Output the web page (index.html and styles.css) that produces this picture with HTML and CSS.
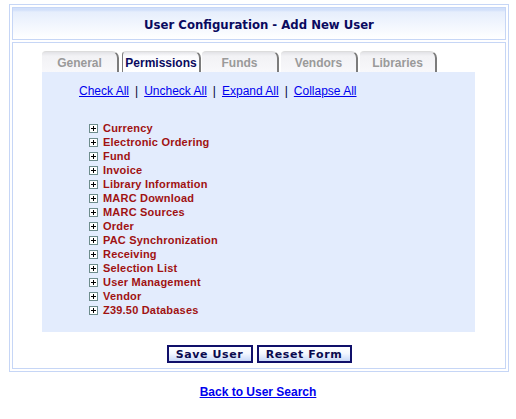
FILE: index.html
```html
<!DOCTYPE html>
<html>
<head>
<meta charset="utf-8">
<link rel="stylesheet" href="styles.css">
</head>
<body>
<div class="outer">
  <div class="header">User Configuration - Add New User</div>
  <div class="content">
    <div class="tabs">
      <div class="tab">General</div>
      <div class="tab active">Permissions</div>
      <div class="tab">Funds</div>
      <div class="tab">Vendors</div>
      <div class="tab">Libraries</div>
    </div>
    <div class="panel">
      <div class="links">
        <a href="#">Check All</a><span class="sep">|</span><a href="#">Uncheck All</a><span class="sep">|</span><a href="#">Expand All</a><span class="sep">|</span><a href="#">Collapse All</a>
      </div>
      <ul class="tree">
        <li><svg class="plus" width="9" height="9" viewBox="0 0 9 9"><rect x="0.5" y="0.5" width="8" height="8" fill="#fff" stroke="#6e8c8c"/><path d="M2 4.5h5M4.5 2v5" stroke="#000" stroke-width="1"/></svg>Currency</li>
        <li><svg class="plus" width="9" height="9" viewBox="0 0 9 9"><rect x="0.5" y="0.5" width="8" height="8" fill="#fff" stroke="#6e8c8c"/><path d="M2 4.5h5M4.5 2v5" stroke="#000" stroke-width="1"/></svg>Electronic Ordering</li>
        <li><svg class="plus" width="9" height="9" viewBox="0 0 9 9"><rect x="0.5" y="0.5" width="8" height="8" fill="#fff" stroke="#6e8c8c"/><path d="M2 4.5h5M4.5 2v5" stroke="#000" stroke-width="1"/></svg>Fund</li>
        <li><svg class="plus" width="9" height="9" viewBox="0 0 9 9"><rect x="0.5" y="0.5" width="8" height="8" fill="#fff" stroke="#6e8c8c"/><path d="M2 4.5h5M4.5 2v5" stroke="#000" stroke-width="1"/></svg>Invoice</li>
        <li><svg class="plus" width="9" height="9" viewBox="0 0 9 9"><rect x="0.5" y="0.5" width="8" height="8" fill="#fff" stroke="#6e8c8c"/><path d="M2 4.5h5M4.5 2v5" stroke="#000" stroke-width="1"/></svg>Library Information</li>
        <li><svg class="plus" width="9" height="9" viewBox="0 0 9 9"><rect x="0.5" y="0.5" width="8" height="8" fill="#fff" stroke="#6e8c8c"/><path d="M2 4.5h5M4.5 2v5" stroke="#000" stroke-width="1"/></svg>MARC Download</li>
        <li><svg class="plus" width="9" height="9" viewBox="0 0 9 9"><rect x="0.5" y="0.5" width="8" height="8" fill="#fff" stroke="#6e8c8c"/><path d="M2 4.5h5M4.5 2v5" stroke="#000" stroke-width="1"/></svg>MARC Sources</li>
        <li><svg class="plus" width="9" height="9" viewBox="0 0 9 9"><rect x="0.5" y="0.5" width="8" height="8" fill="#fff" stroke="#6e8c8c"/><path d="M2 4.5h5M4.5 2v5" stroke="#000" stroke-width="1"/></svg>Order</li>
        <li><svg class="plus" width="9" height="9" viewBox="0 0 9 9"><rect x="0.5" y="0.5" width="8" height="8" fill="#fff" stroke="#6e8c8c"/><path d="M2 4.5h5M4.5 2v5" stroke="#000" stroke-width="1"/></svg>PAC Synchronization</li>
        <li><svg class="plus" width="9" height="9" viewBox="0 0 9 9"><rect x="0.5" y="0.5" width="8" height="8" fill="#fff" stroke="#6e8c8c"/><path d="M2 4.5h5M4.5 2v5" stroke="#000" stroke-width="1"/></svg>Receiving</li>
        <li><svg class="plus" width="9" height="9" viewBox="0 0 9 9"><rect x="0.5" y="0.5" width="8" height="8" fill="#fff" stroke="#6e8c8c"/><path d="M2 4.5h5M4.5 2v5" stroke="#000" stroke-width="1"/></svg>Selection List</li>
        <li><svg class="plus" width="9" height="9" viewBox="0 0 9 9"><rect x="0.5" y="0.5" width="8" height="8" fill="#fff" stroke="#6e8c8c"/><path d="M2 4.5h5M4.5 2v5" stroke="#000" stroke-width="1"/></svg>User Management</li>
        <li><svg class="plus" width="9" height="9" viewBox="0 0 9 9"><rect x="0.5" y="0.5" width="8" height="8" fill="#fff" stroke="#6e8c8c"/><path d="M2 4.5h5M4.5 2v5" stroke="#000" stroke-width="1"/></svg>Vendor</li>
        <li><svg class="plus" width="9" height="9" viewBox="0 0 9 9"><rect x="0.5" y="0.5" width="8" height="8" fill="#fff" stroke="#6e8c8c"/><path d="M2 4.5h5M4.5 2v5" stroke="#000" stroke-width="1"/></svg>Z39.50 Databases</li>
      </ul>
    </div>
    <div class="buttons">
      <button class="btn save">Save User</button>
      <button class="btn reset">Reset Form</button>
    </div>
  </div>
</div>
<div class="back"><a href="#">Back to User Search</a></div>
</body>
</html>
```

FILE: styles.css
```css
html, body {
  margin: 0;
  padding: 0;
  background: #fff;
  font-family: "Liberation Sans", Arial, sans-serif;
}
.outer {
  box-sizing: border-box;
  width: 500px;
  margin: 4px 0 0 9px;
  border: 1px solid #c6d6f6;
  padding: 2px;
}
.header {
  box-sizing: border-box;
  height: 33px;
  border: 1px solid #c6d6f6;
  background: linear-gradient(to bottom, #d2e0fa 0px, #d2e0fa 2px, #e6eefc 4px, #f3f7fe 18px, #ffffff 31px);
  color: #0a0a5e;
  font-family: "DejaVu Sans Condensed", "DejaVu Sans", sans-serif;
  font-weight: bold;
  font-size: 13px;
  display: flex;
  align-items: center;
  justify-content: center;
  padding-top: 1px;
  margin-bottom: 2px;
}
.content {
  box-sizing: border-box;
  height: 327px;
  border: 1px solid #c6d6f6;
  padding: 8px 0 0 29px;
}
.tabs {
  display: flex;
  height: 21px;
}
.tab {
  box-sizing: border-box;
  width: 77px;
  height: 21px;
  margin-right: 2px;
  border-top: 1px solid #dcdcdc;
  border-right: 2px solid #7c7c7c;
  border-radius: 4px 7px 0 0;
  background: linear-gradient(to bottom, #e2e2e6 0px, #f2f2f5 4px, #f8f8fb 21px);
  color: #9a9a9a;
  font-size: 12px;
  font-weight: bold;
  text-align: center;
  line-height: 22px;
}
.tab.active {
  border-left: 1px solid #7c7c7c;
  background: linear-gradient(to bottom, #e4e4e8 0px, #fbfbfd 4px, #ffffff 21px);
  color: #0a0a5e;
  width: 79px;
  margin-left: 1px;
  margin-right: 1px;
}
.panel {
  box-sizing: border-box;
  width: 433px;
  height: 260px;
  background: #e3ecfd;
  padding: 12px 0 0 37px;
}
.links {
  font-size: 12px;
  color: #0000cc;
  line-height: 15px;
}
.links a {
  color: #0000ee;
  text-decoration: underline;
}
.sep {
  margin: 0 6px;
  color: #000033;
}
.tree {
  list-style: none;
  margin: 22px 0 0 10px;
  padding: 0;
}
.tree li {
  display: flex;
  align-items: center;
  height: 14px;
  font-size: 11px;
  font-weight: bold;
  color: #a01212;
  letter-spacing: 0.2px;
}
.plus {
  display: block;
  margin-right: 5px;
  flex: none;
}
.buttons {
  display: flex;
  justify-content: center;
  gap: 4px;
  margin: 13px 0 0 -29px;
}
.btn {
  box-sizing: border-box;
  height: 18px;
  border: 2px solid #10106a;
  background: linear-gradient(to bottom, #ffffff 0%, #f4f8ff 45%, #c9d9f8 100%);
  color: #0a0a4e;
  font-family: "DejaVu Sans", Verdana, sans-serif;
  font-weight: bold;
  font-size: 11px;
  letter-spacing: 0.6px;
  padding: 0;
  line-height: 13px;
}
.btn.save { width: 86px; }
.btn.reset { width: 95px; }
.back {
  text-align: center;
  margin-top: 13px;
  font-size: 12px;
  font-weight: bold;
}
.back a {
  color: #0000ee;
  text-decoration: underline;
}
```
